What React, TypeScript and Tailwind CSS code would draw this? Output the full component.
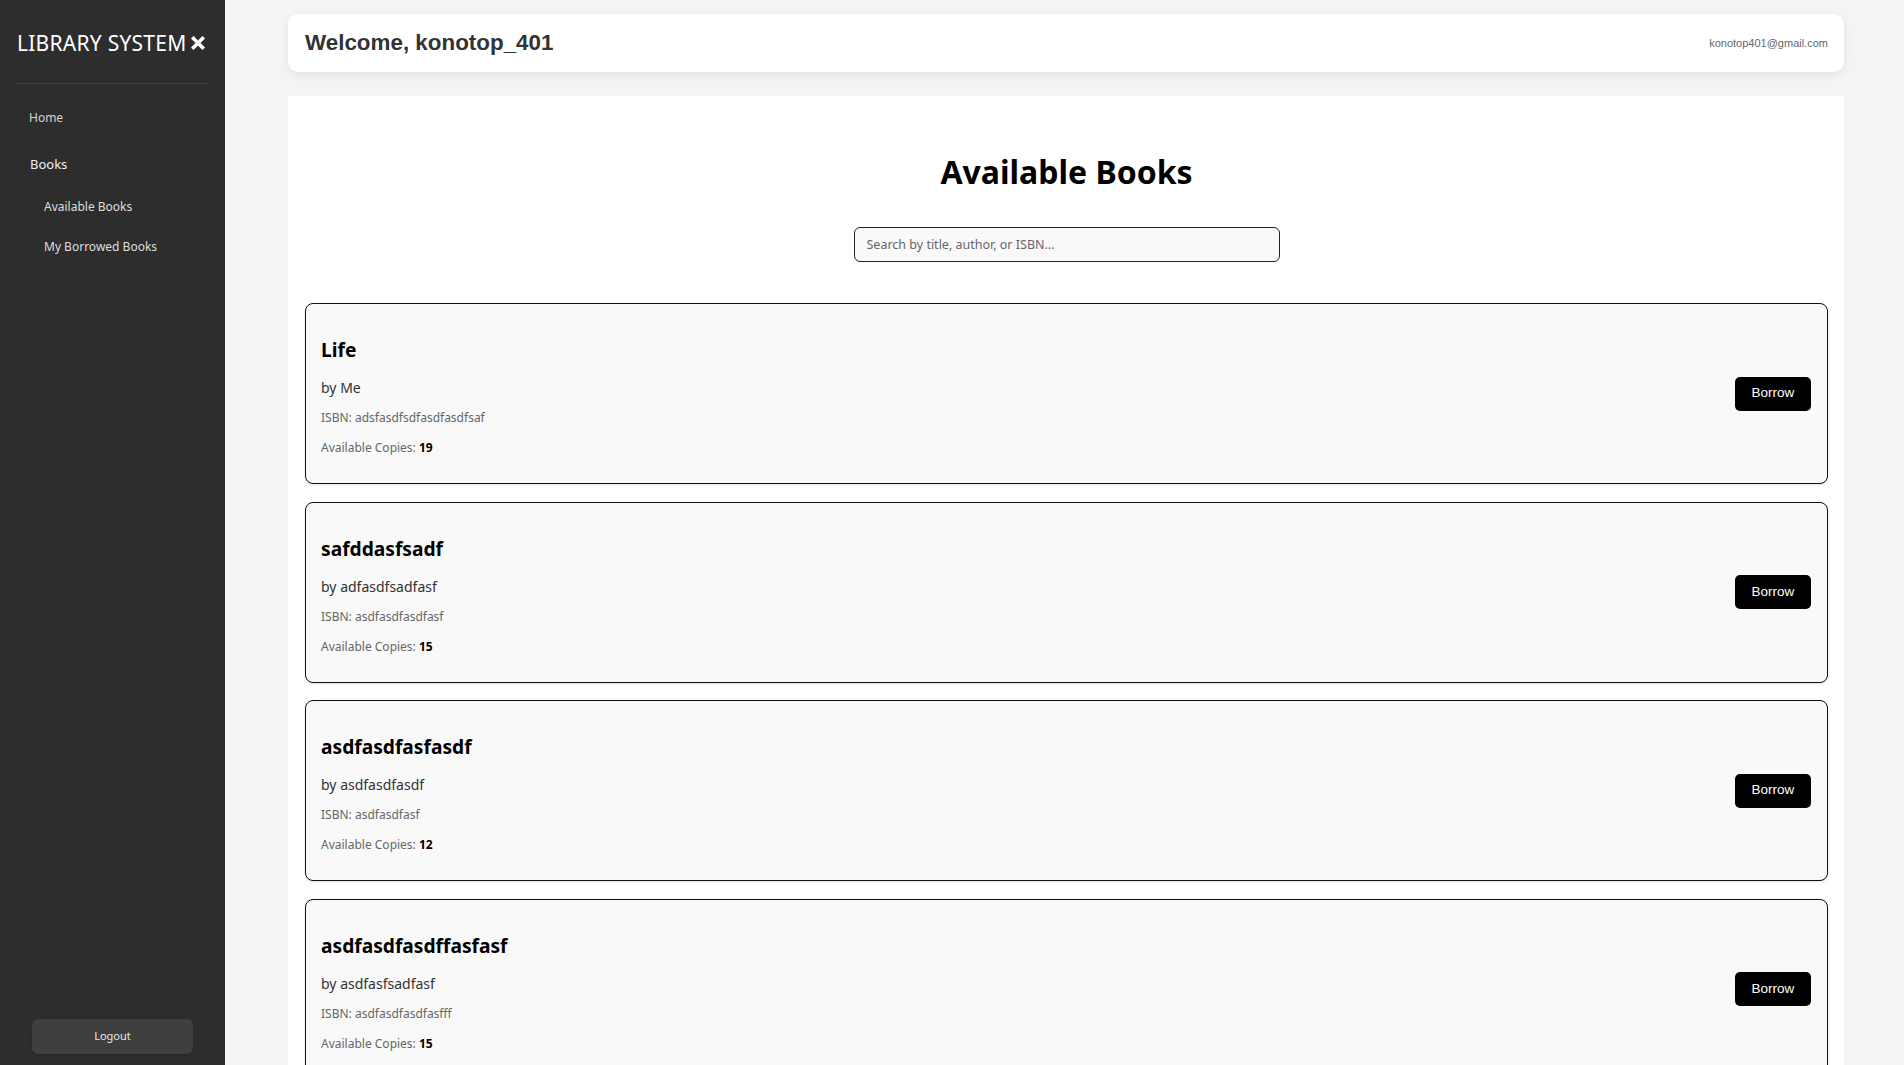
import React from 'react';

type Book = { id: number; title: string; author: string; isbn: string; copies: number };

const books: Book[] = [
    { id: 1, title: 'Life', author: 'Me', isbn: 'adsfasdfsdfasdfasdfsaf', copies: 19 },
    { id: 2, title: 'safddasfsadf', author: 'adfasdfsadfasf', isbn: 'asdfasdfasdfasf', copies: 15 },
    { id: 3, title: 'asdfasdfasfasdf', author: 'asdfasdfasdf', isbn: 'asdfasdfasf', copies: 12 },
    { id: 4, title: 'asdfasdfasdffasfasf', author: 'asdfasfsadfasf', isbn: 'asdfasdfasdfasfff', copies: 15 },
];

function CloseIcon() {
    return (
        <svg width="14" height="14" viewBox="0 0 14 14" className="ml-[4px] shrink-0">
            <path d="M2.5 2.5 L11.5 11.5 M11.5 2.5 L2.5 11.5" stroke="#fff" strokeWidth="3.6" strokeLinecap="square" />
        </svg>
    );
}

function Sidebar() {
    return (
        <aside className="flex h-screen w-[225px] shrink-0 flex-col bg-[#2d2d2d] px-4">
            <div className="mt-[29px] flex items-center whitespace-nowrap pl-[1px] text-[21px] leading-[28px] tracking-[0.25px] text-white">
                LIBRARY SYSTEM
                <CloseIcon />
            </div>
            <div className="mt-[26px] h-px bg-[#444444]" />
            <nav className="flex flex-col">
                <a className="mt-[26px] pl-[13px] text-[12px] leading-4 text-[#d4d4d4]">Home</a>
                <a className="mt-[30px] pl-[14px] text-[13px] leading-4 text-[#f0f0f0]">Books</a>
                <a className="mt-[27px] pl-[28px] text-[12px] leading-4 text-[#dedede]">Available Books</a>
                <a className="mt-[24px] pl-[28px] text-[12px] leading-4 text-[#dedede]">My Borrowed Books</a>
            </nav>
            <div className="flex-1" />
            <button className="mx-4 mb-[11px] h-[35px] rounded-md bg-[#3f3f3f] text-[11px] text-[#e5e5e5] shadow-sm">Logout</button>
        </aside>
    );
}

function BookCard({ book }: { book: Book }) {
    return (
        <div className="flex items-center justify-between rounded-lg border border-[#111111] bg-[#f9f9f9] pl-[15px] pr-4 shadow-sm">
            <div className="flex flex-col pt-[34px] pb-[27px]">
                <h3 className="text-[19.2px] font-bold leading-6 text-black">{book.title}</h3>
                <p className="mt-4 text-[14px] leading-5 text-[#333333]">by {book.author}</p>
                <p className="mt-3 text-[12px] leading-4 text-[#666666]">ISBN: {book.isbn}</p>
                <p className="mt-[14px] text-[12px] leading-4 text-[#666666]">
                    Available Copies: <span className="font-bold text-black">{book.copies}</span>
                </p>
            </div>
            <button className="h-[34px] w-[76px] rounded-[5px] bg-black text-[13.5px] text-white" style={{ fontFamily: '"Liberation Sans", Arial, sans-serif' }}>
                Borrow
            </button>
        </div>
    );
}

export default function App() {
    return (
        <div className="flex h-screen overflow-hidden bg-[#f3f4f6]" style={{ fontFamily: '"Noto Sans", "Open Sans", sans-serif' }}>
            <Sidebar />
            <main className="flex-1 overflow-hidden pl-[63px] pr-[60px] pt-[14px]">
                <header className="flex h-[58px] items-center justify-between rounded-[10px] bg-white pl-[17px] pr-4 shadow-[0_3px_8px_rgba(0,0,0,0.08)]" style={{ fontFamily: '"Liberation Sans", Arial, sans-serif' }}>
                    <h2 className="text-[22.4px] font-bold text-[#333333]">Welcome, konotop_401</h2>
                    <span className="text-[11px] text-[#666666]">konotop401@gmail.com</span>
                </header>
                <section className="mt-6 bg-white pl-[17px] pr-4 pb-10">
                    <h1 className="pt-[57px] text-center text-[32px] font-bold leading-[38px] text-black">Available Books</h1>
                    <div className="mt-9 flex justify-center">
                        <input
                            placeholder="Search by title, author, or ISBN..."
                            className="h-[35px] w-[426px] rounded-md border border-[#222222] bg-[#f9f9f9] px-3 text-[12.5px] text-black placeholder:text-[#666666]"
                        />
                    </div>
                    <div className="mt-[41px] flex flex-col gap-[17.5px]">
                        {books.map((book) => <BookCard key={book.id} book={book} />)}
                    </div>
                </section>
            </main>
        </div>
    );
}
